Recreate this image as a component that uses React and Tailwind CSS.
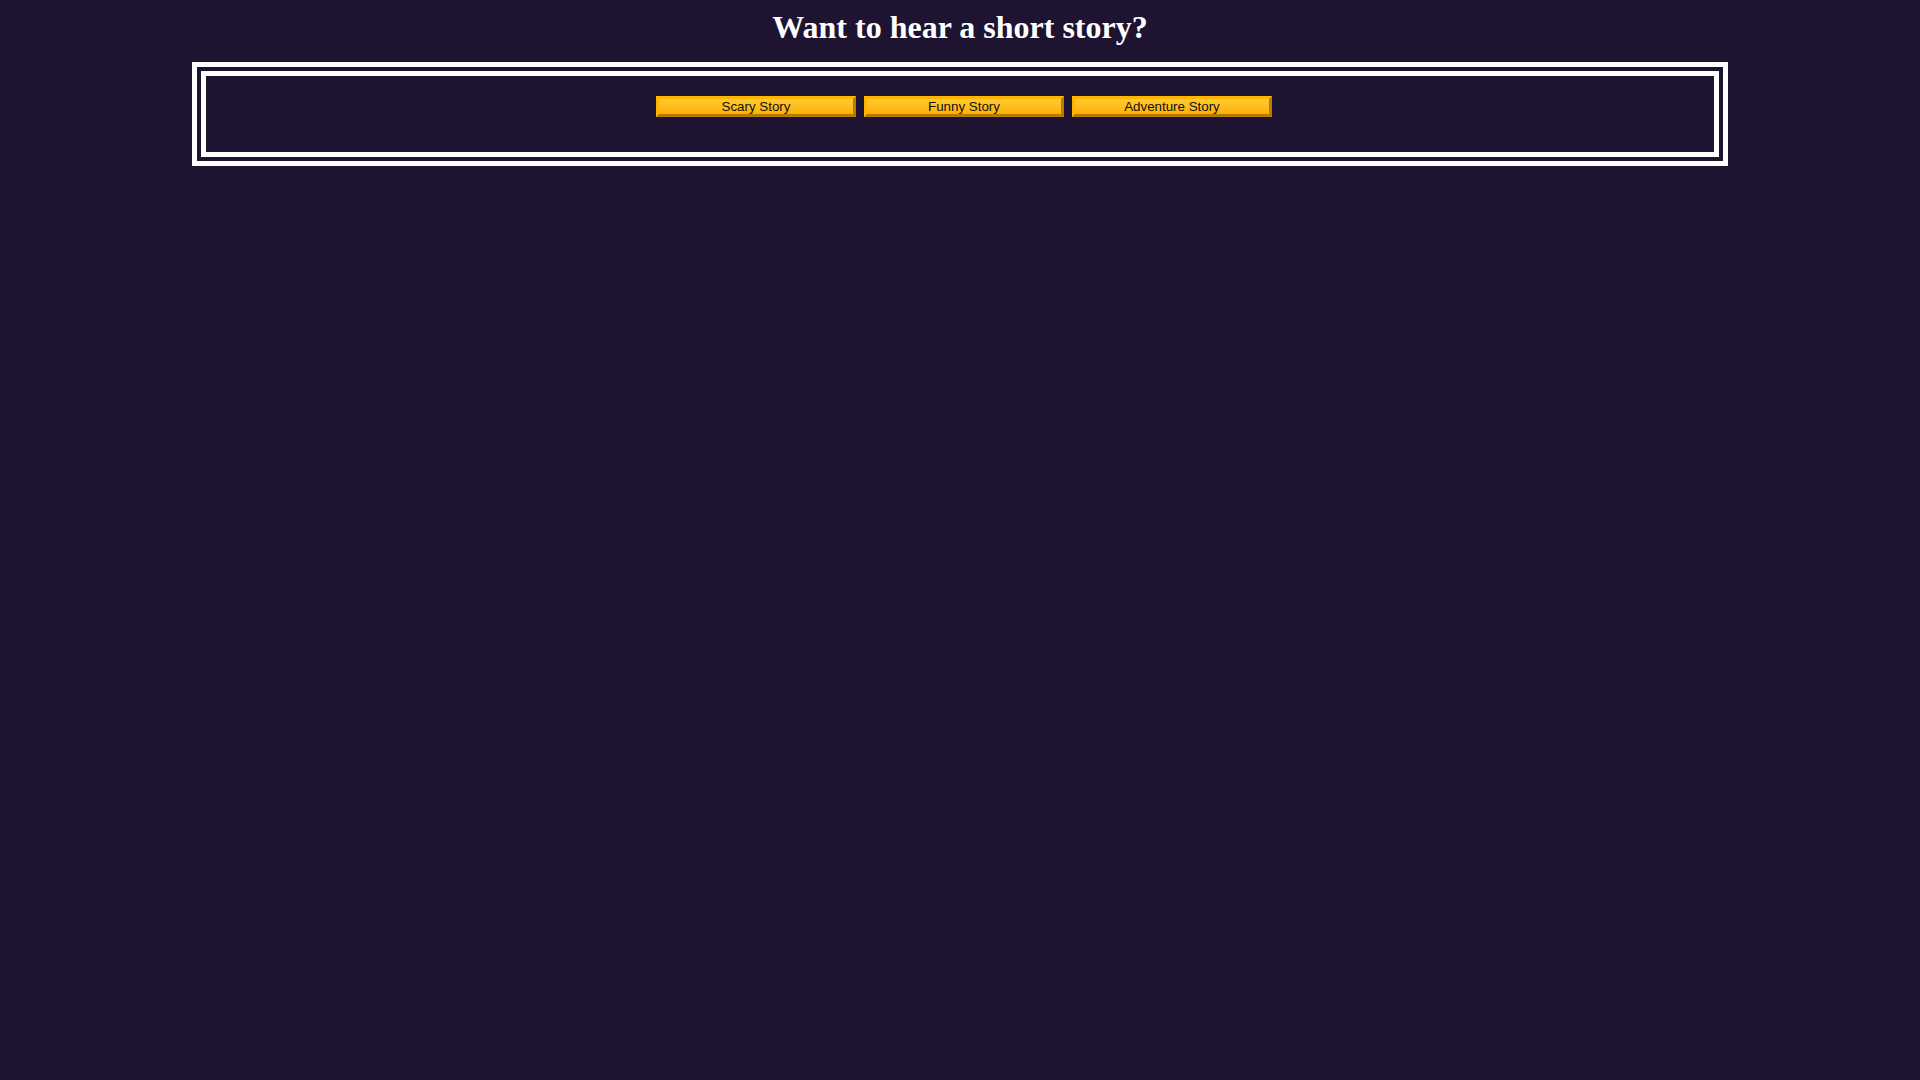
import React, { useState } from "react";

const stories = [
  { id: "scary", label: "Scary Story" },
  { id: "funny", label: "Funny Story" },
  { id: "adventure", label: "Adventure Story" },
];

const App = () => {
  const [picked, setPicked] = useState(null);

  return (
    <div className="min-h-screen w-full bg-[#1e1432] pt-[9px] font-['Liberation_Sans',Arial,sans-serif]">
      <h1 className="mb-4 text-center font-['Liberation_Serif','Times_New_Roman',serif] text-[32px] font-bold leading-[37px] text-white">
        Want to hear a short story?
      </h1>

      {/* double-framed box */}
      <div className="mx-auto w-[80%] border-[14px] border-double border-white px-5 pt-5 pb-[35px]">
        <div className="flex justify-center">
          {stories.map((s) => (
            <button
              key={s.id}
              onClick={() => setPicked(s.id)}
              className="ml-2 h-[21px] w-[200px] border-[3px] border-t-[#ffb400] border-l-[#ffb400] border-b-[#b57c00] border-r-[#b57c00] bg-gradient-to-b from-[#ffcb2e] to-[#ffb000] text-[13.33px] leading-[15px] text-[#111]"
            >
              {s.label}
            </button>
          ))}
        </div>
        {picked && <p className="hidden">{picked}</p>}
      </div>
    </div>
  );
};

export default App;
